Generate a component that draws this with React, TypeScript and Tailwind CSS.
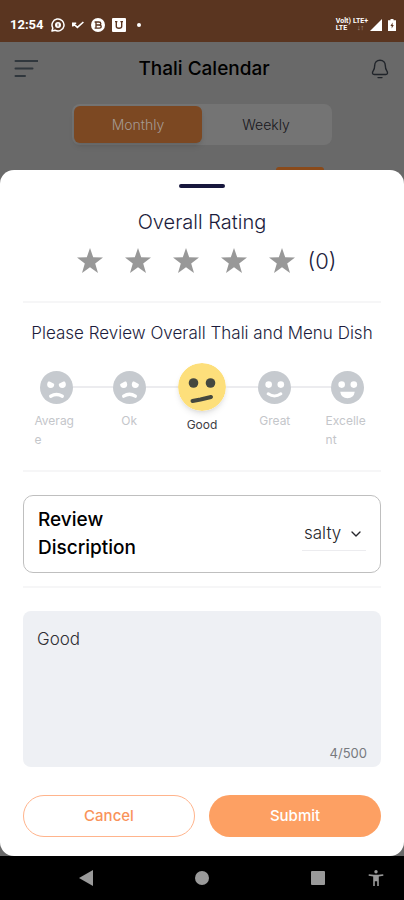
import { useState, type ReactNode } from "react";
import clsx from "clsx";
import { ChevronDown } from "lucide-react";

const MAX_LENGTH = 500;

const MOODS = [
  { name: "Average", face: <AverageFace /> },
  { name: "Ok", face: <OkFace /> },
  { name: "Good", face: <GoodFace /> },
  { name: "Great", face: <GreatFace /> },
  { name: "Excellent", face: <ExcellentFace /> },
];

export default function App() {
  return (
    <div className="flex min-h-screen flex-col bg-[#696969] font-[Inter,sans-serif]">
      <StatusBar />
      <CalendarHeader />
      <ReviewSheet />
      <NavBar />
    </div>
  );
}

function StatusBar() {
  return (
    <div className="flex h-[42px] items-center justify-between bg-[#5a3520] pt-2 pr-2 pl-2.5 text-white">
      <div className="flex items-center gap-[7px]">
        <span className="font-[Roboto,sans-serif] text-[13px] font-bold">12:54</span>
        {/* WhatsApp business */}
        <svg className="size-3.5" viewBox="0 0 14 14" fill="none" stroke="currentColor">
          <path d="M1 13l.8-3A6 6 0 1 1 4 12.2z" strokeWidth="1.5" strokeLinejoin="round" />
          <circle cx="7" cy="7" r="3" fill="currentColor" stroke="none" />
          <path d="M7 5.6v2.8" stroke="#5a3520" />
        </svg>
        {/* Missed call */}
        <svg className="h-3.5 w-3" viewBox="0 0 12 14" fill="none" stroke="currentColor" strokeWidth="1.6">
          <path d="M.8 8.6V5.2h3.4M1 5.4l4.4 4L11.4 4" />
        </svg>
        <svg className="size-3.5" viewBox="0 0 14 14">
          <circle cx="7" cy="7" r="7" fill="currentColor" />
          <path d="M5 3.8v6.6M3.6 4h4.2q2 0 2 1.5T7.8 7H5h3q2.2 0 2.2 1.6t-2 1.6H3.6" fill="none" stroke="#5a3520" strokeWidth="1.3" />
        </svg>
        <svg className="size-3.5" viewBox="0 0 14 14">
          <rect width="14" height="14" rx="1" fill="currentColor" />
          <path d="M3 3.6h2.4M4.3 3.6v5q0 1.7 2.7 1.7t2.7-1.7v-5M8.4 3.6h2.6" fill="none" stroke="#5a3520" strokeWidth="1.4" />
        </svg>
        <span className="ml-1 size-1 rounded-full bg-white" />
      </div>
      <div className="flex items-center gap-0.5 font-[Roboto,sans-serif] text-[7px] leading-[7px] font-bold">
        <span>
          Volt)
          <br />
          LTE
        </span>
        <span className="flex flex-col items-center">
          LTE+
          <span className="opacity-50">↓↑</span>
        </span>
        <svg className="h-3 w-3" viewBox="0 0 12 12" fill="currentColor">
          <path d="M12 0v12H0z" />
        </svg>
        <svg className="ml-1 h-3 w-2" viewBox="0 0 8 12">
          <path d="M2.5 0h3v1.2H8V12H0V1.2h2.5z" fill="currentColor" />
          <path d="M4.6 3.4L2.4 7h1.3v2.6L5.8 6H4.6z" fill="#5a3520" />
        </svg>
      </div>
    </div>
  );
}

function CalendarHeader() {
  return (
    <header className="flex flex-col">
      <div className="flex h-[54px] items-center justify-between px-3.5">
        <button aria-label="Menu">
          <svg className="h-5 w-6" viewBox="0 0 24 20" fill="none" stroke="#30373d" strokeWidth="2" strokeLinecap="round">
            <path d="M1.500 2h22M1.500 9.500h17M1.500 17h9.500" />
          </svg>
        </button>
        <h1 className="text-[19px] font-medium text-black">Thali Calendar</h1>
        <button aria-label="Notifications">
          <svg className="size-5" viewBox="0 0 20 20" fill="none" stroke="#20242a" strokeWidth="1.4" strokeLinecap="round" strokeLinejoin="round">
            <path d="M10 1.200c-3.300 0-5.300 2.400-5.300 5.300 0 2.800-.5 3.900-1.500 5.300-1.300 1.800-.8 3.700 1.100 3.700h11.400c1.900 0 2.400-1.900 1.100-3.700-1-1.400-1.500-2.500-1.500-5.300 0-2.900-2-5.300-5.300-5.300z" />
            <path d="M8 18.600h4" />
          </svg>
        </button>
      </div>
      <div className="mx-auto mt-2 grid w-[260px] grid-cols-2 rounded-lg bg-[#747474] p-0.5">
        <button className="h-[37px] rounded-md bg-[#7c4822] text-sm font-light text-[#a59a92] shadow-md">Monthly</button>
        <button className="h-[37px] text-sm font-light text-[#17171c]">Weekly</button>
      </div>
      <div className="mt-[22px] mr-20 ml-auto h-[3px] w-12 rounded-t-sm bg-[#8a4a1a]" />
    </header>
  );
}

function ReviewSheet() {
  const [rating, setRating] = useState(0);
  const [mood, setMood] = useState("Good");
  const [comment, setComment] = useState("Good");

  return (
    <main className="flex-1 rounded-[14px] bg-white pt-3.5">
      <div className="mx-auto h-1 w-[46px] rounded-full bg-[#17173d]" />

      <h2 className="mt-5 text-center text-xl leading-7 font-light text-[#1c1c3c]">Overall Rating</h2>
      <div className="mt-[9px] flex h-8 items-center justify-center gap-5 pl-2">
        {[1, 2, 3, 4, 5].map((star) => (
          <button key={star} aria-label={`${star} stars`} onClick={() => setRating(star)}>
            <svg className={clsx("size-7", star <= rating ? "text-[#ffa05f]" : "text-[#989898]")} viewBox="0 0 28 28" fill="currentColor">
              <path d="M14 1l3.200 9.300 9.800.2-7.800 5.900 2.800 9.600-8-5.700-8 5.700 2.800-9.600L1 10.500l9.800-.2z" />
            </svg>
          </button>
        ))}
        <span className="-ml-2 text-[22px] font-light text-[#1c1c3c]">({rating})</span>
      </div>

      <Divider className="mt-6" />

      <h2 className="mt-[18px] text-center text-[17px] leading-6 font-light whitespace-nowrap text-[#1c1c3c]">
        Please Review Overall Thali and Menu Dish
      </h2>
      <div className="mt-[18px] grid grid-cols-5 px-5">
        {MOODS.map(({ name, face }, i) => (
          <label key={name} className="flex flex-col items-center">
            <input type="radio" name="mood" className="sr-only" checked={mood === name} onChange={() => setMood(name)} />
            <span className="flex h-12 w-full items-center">
              <span className={clsx("h-0.5 flex-1", i > 0 && "bg-[#ececef]")} />
              {face}
              <span className={clsx("h-0.5 flex-1", i < MOODS.length - 1 && "bg-[#ececef]")} />
            </span>
            <span
              className={clsx(
                "max-w-11 text-xs leading-[19px] break-all",
                mood === name ? "mt-1 text-[#3c3c44]" : "text-[#c4c6ca]"
              )}
            >
              {name}
            </span>
          </label>
        ))}
      </div>

      <Divider className="mt-[21px]" />

      <div className="mx-[23px] mt-[23px] flex h-[78px] items-center justify-between rounded-[10px] border border-[#bfbfbf] px-3.5">
        <label htmlFor="taste" className="w-32 text-[19px] leading-7 font-medium text-black">
          Review Discription
        </label>
        <div className="grid w-16 items-center border-b border-[#ececef]">
          <select id="taste" defaultValue="salty" className="col-start-1 row-start-1 h-8 w-full appearance-none pl-0.5 text-[17px] font-light text-[#26262b]">
            <option>salty</option>
            <option>spicy</option>
            <option>sweet</option>
          </select>
          <ChevronDown className="pointer-events-none col-start-1 row-start-1 mr-0.5 size-4 justify-self-end text-[#26262b]" />
        </div>
      </div>

      <Divider className="mt-[13px]" />

      <div className="mx-[23px] mt-[23px] flex h-[156px] flex-col rounded-lg bg-[#eef0f4] px-3.5 pt-4 pb-1">
        <textarea
          aria-label="Comment"
          maxLength={MAX_LENGTH}
          value={comment}
          onChange={(e) => setComment(e.target.value)}
          className="w-full flex-1 resize-none text-[17px] leading-6 font-light text-[#2e2e33] outline-none"
        />
        <span className="text-right text-[13px] leading-5 text-[#77797e]">
          {comment.length}/{MAX_LENGTH}
        </span>
      </div>

      <div className="grid grid-cols-2 gap-3.5 px-[23px] pt-7 pb-[19px]">
        <button className="h-[42px] rounded-full border border-[#ffb48c] text-[15px] font-medium text-[#f9935a]">Cancel</button>
        <button className="h-[42px] rounded-full bg-[#fda063] text-[15px] font-medium text-white">Submit</button>
      </div>
    </main>
  );
}

const Divider = ({ className }: { className: string }) => (
  <hr className={clsx("mx-[23px] border-t-2 border-[#f6f6f7]", className)} />
);

const GreyFace = ({ children }: { children: ReactNode }) => (
  <svg className="size-[33px] shrink-0" viewBox="0 0 34 34" fill="none" stroke="#fff" strokeLinecap="round">
    <circle cx="17" cy="17" r="17" fill="#c6cacf" stroke="none" />
    {children}
  </svg>
);

function AverageFace() {
  return (
    <GreyFace>
      <g fill="#fff" stroke="none">
        <circle cx="11" cy="14" r="3.600" />
        <circle cx="23" cy="14" r="3.600" />
      </g>
      {/* brows cut into the eyes */}
      <path d="M9 9l7 3.600M25 9l-7 3.600" stroke="#c6cacf" strokeWidth="2.600" />
      <path d="M11 26q6-3.500 12 0" strokeWidth="3.400" />
    </GreyFace>
  );
}

function OkFace() {
  return (
    <GreyFace>
      <g fill="#fff" stroke="none">
        <circle cx="11" cy="14" r="3.600" />
        <circle cx="23" cy="14" r="3.600" />
      </g>
      <path d="M6.500 12.400l6.500-3.600M27.500 12.400L21 8.800" stroke="#c6cacf" strokeWidth="2.600" />
      <path d="M11 26q6-4 12 0" strokeWidth="3.400" />
    </GreyFace>
  );
}

function GoodFace() {
  return (
    <svg className="size-12 shrink-0 rounded-full shadow-md" viewBox="0 0 48 48">
      <circle cx="24" cy="24" r="24" fill="#fddf7b" />
      <g fill="#45483f">
        <circle cx="15.500" cy="20" r="4.800" />
        <circle cx="32.500" cy="20" r="4.800" />
      </g>
      <path d="M14.500 38l8-1.500 10.500-2.500" fill="none" stroke="#45483f" strokeWidth="4" strokeLinecap="round" />
    </svg>
  );
}

function GreatFace() {
  return (
    <GreyFace>
      <g fill="#fff" stroke="none">
        <circle cx="11" cy="14" r="3.400" />
        <circle cx="23.500" cy="14" r="3.400" />
      </g>
      <path d="M10.500 23.500q6.500 4.500 13 0" strokeWidth="3.200" />
    </GreyFace>
  );
}

function ExcellentFace() {
  return (
    <GreyFace>
      <g fill="#fff" stroke="none">
        <circle cx="11" cy="14" r="3.400" />
        <circle cx="23.500" cy="14" r="3.400" />
        <path d="M9.500 21.500h15q-1 6.500-7.500 6.500t-7.500-6.500z" />
      </g>
    </GreyFace>
  );
}

function NavBar() {
  return (
    <nav className="grid h-11 grid-cols-[1fr_1fr_1fr_28px] items-center justify-items-center bg-black pl-7 text-[#9a9a9a]">
      <button aria-label="Back">
        <svg className="size-4" viewBox="0 0 16 16" fill="currentColor">
          <path d="M15 0v16L1 8z" />
        </svg>
      </button>
      <button aria-label="Home">
        <svg className="size-3.5" viewBox="0 0 14 14" fill="currentColor">
          <circle cx="7" cy="7" r="7" />
        </svg>
      </button>
      <button aria-label="Recent apps">
        <svg className="size-3.5" viewBox="0 0 14 14" fill="currentColor">
          <rect width="14" height="14" rx="1" />
        </svg>
      </button>
      <button aria-label="Accessibility" className="-ml-2 justify-self-start">
        <svg className="size-4" viewBox="0 0 16 16" fill="currentColor">
          <circle cx="8" cy="1.700" r="1.700" />
          <path d="M.8 4.200l5 .6h4.400l5-.6.2 1.500-4.600.7V16H9.200v-4.800H6.800V16H5.200V6.400L.6 5.700z" />
        </svg>
      </button>
    </nav>
  );
}
